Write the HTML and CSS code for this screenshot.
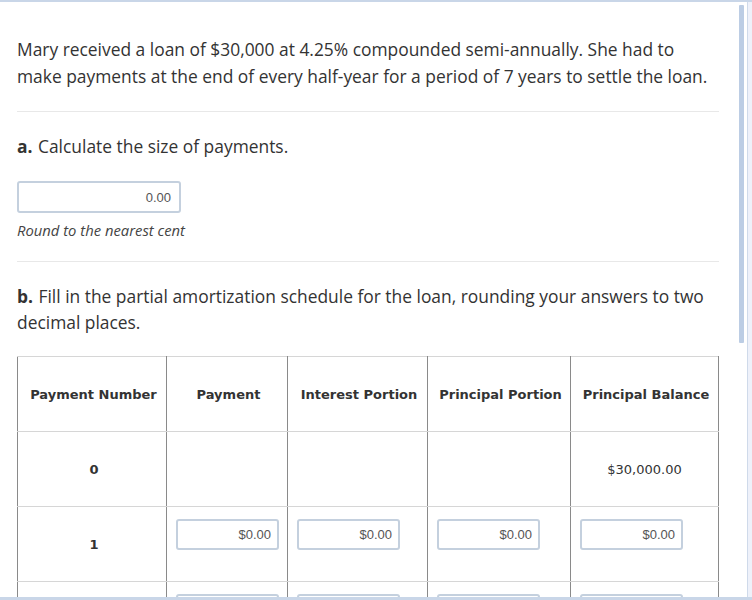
FILE: index.html
```html
<!DOCTYPE html>
<html>
<head>
<meta charset="utf-8">
<link rel="stylesheet" href="styles.css">
</head>
<body>
<div class="frame">
  <div class="content">
    <p class="intro">Mary received a loan of $30,000 at 4.25% compounded semi-annually. She had to make payments at the end of every half-year for a period of 7 years to settle the loan.</p>
    <hr class="sep">
    <p class="q"><b>a.</b> Calculate the size of payments.</p>
    <div class="box box-a">0.00</div>
    <p class="hint">Round to the nearest cent</p>
    <hr class="sep sep2">
    <p class="q qb"><b>b.</b> Fill in the partial amortization schedule for the loan, rounding your answers to two decimal places.</p>
    <table class="sched">
      <colgroup>
        <col class="c1"><col class="c2"><col class="c3"><col class="c4"><col class="c5">
      </colgroup>
      <tr class="head">
        <th>Payment Number</th><th>Payment</th><th>Interest Portion</th><th>Principal Portion</th><th>Principal Balance</th>
      </tr>
      <tr>
        <td class="num">0</td><td></td><td></td><td></td><td class="val">$30,000.00</td>
      </tr>
      <tr>
        <td class="num">1</td>
        <td class="in"><div class="box">$0.00</div></td>
        <td class="in"><div class="box">$0.00</div></td>
        <td class="in"><div class="box">$0.00</div></td>
        <td class="in"><div class="box">$0.00</div></td>
      </tr>
      <tr>
        <td class="num"></td>
        <td class="in"><div class="box"></div></td>
        <td class="in"><div class="box"></div></td>
        <td class="in"><div class="box"></div></td>
        <td class="in"><div class="box"></div></td>
      </tr>
    </table>
  </div>
  <div class="rail">
    <div class="track"><div class="thumb"></div></div>
    <div class="edge"></div>
  </div>
</div>
</body>
</html>
```

FILE: styles.css
```css
html, body {
  margin: 0;
  padding: 0;
  background: #ffffff;
}
.frame {
  height: 600px;
  box-sizing: border-box;
  border-top: 2px solid #c9d6e8;
  border-bottom: 3px solid #c9d6e8;
  display: flex;
  overflow: hidden;
}
.content {
  flex: 1;
  padding: 34px 18px 0 17px;
  overflow: hidden;
  font-family: "Open Sans", sans-serif;
  color: #333333;
}
.intro {
  margin: 0;
  font-size: 17.4px;
  line-height: 27px;
}
.sep {
  border: 0;
  border-top: 1px solid #e8e8e8;
  margin: 21px 0 0 0;
  height: 0;
}
.q {
  margin: 21px 0 0 0;
  font-size: 17.4px;
  line-height: 27px;
}
.q b {
  font-weight: 700;
  margin-right: 1px;
}
.qb {
  line-height: 26px;
  margin-top: 21px;
}
.box {
  box-sizing: border-box;
  height: 31px;
  width: 103px;
  border: 2px solid #c4d0de;
  border-radius: 3px;
  font-family: "Liberation Sans", Arial, sans-serif;
  font-size: 13px;
  color: #555555;
  text-align: right;
  padding: 0 6px;
  line-height: 28px;
  background: #fff;
}
.box-a {
  margin-top: 21px;
  width: 164px;
  height: 32px;
  line-height: 30px;
  padding-right: 8px;
}
.hint {
  margin: 8px 0 0 0;
  font-size: 14.8px;
  line-height: 18px;
  font-style: italic;
  color: #444;
}
.sep2 {
  margin-top: 22px;
}
.sched {
  margin-top: 21px;
  border-collapse: collapse;
  table-layout: fixed;
  width: 702px;
  font-family: "DejaVu Sans", Verdana, sans-serif;
  font-size: 13px;
  color: #333;
}
.c1 { width: 149px; }
.c2 { width: 121px; }
.c3 { width: 140px; }
.c4 { width: 143px; }
.c5 { width: 148px; }
.sched th, .sched td {
  height: 75px;
  box-sizing: border-box;
  border-top: 1px solid #d6d6d6;
  border-bottom: 1px solid #d6d6d6;
  border-left: 1px solid #8a8a8a;
  border-right: 1px solid #8a8a8a;
  text-align: center;
  vertical-align: middle;
  padding: 0;
}
.sched th {
  font-weight: 700;
  padding-left: 3px;
}
.sched td.num {
  font-weight: 700;
  padding-left: 4px;
}
.sched td.in {
  vertical-align: top;
  padding: 12px 0 0 9px;
  text-align: left;
}
.rail {
  width: 15px;
  display: flex;
  flex-shrink: 0;
}
.track {
  width: 8px;
  padding-top: 3px;
  padding-left: 2px;
}
.thumb {
  width: 5px;
  height: 338px;
  background: #bccde4;
  border-radius: 1px;
}
.edge {
  flex: 1;
  border-left: 1px solid #cfdaea;
  background: #eef1fa;
}
```
